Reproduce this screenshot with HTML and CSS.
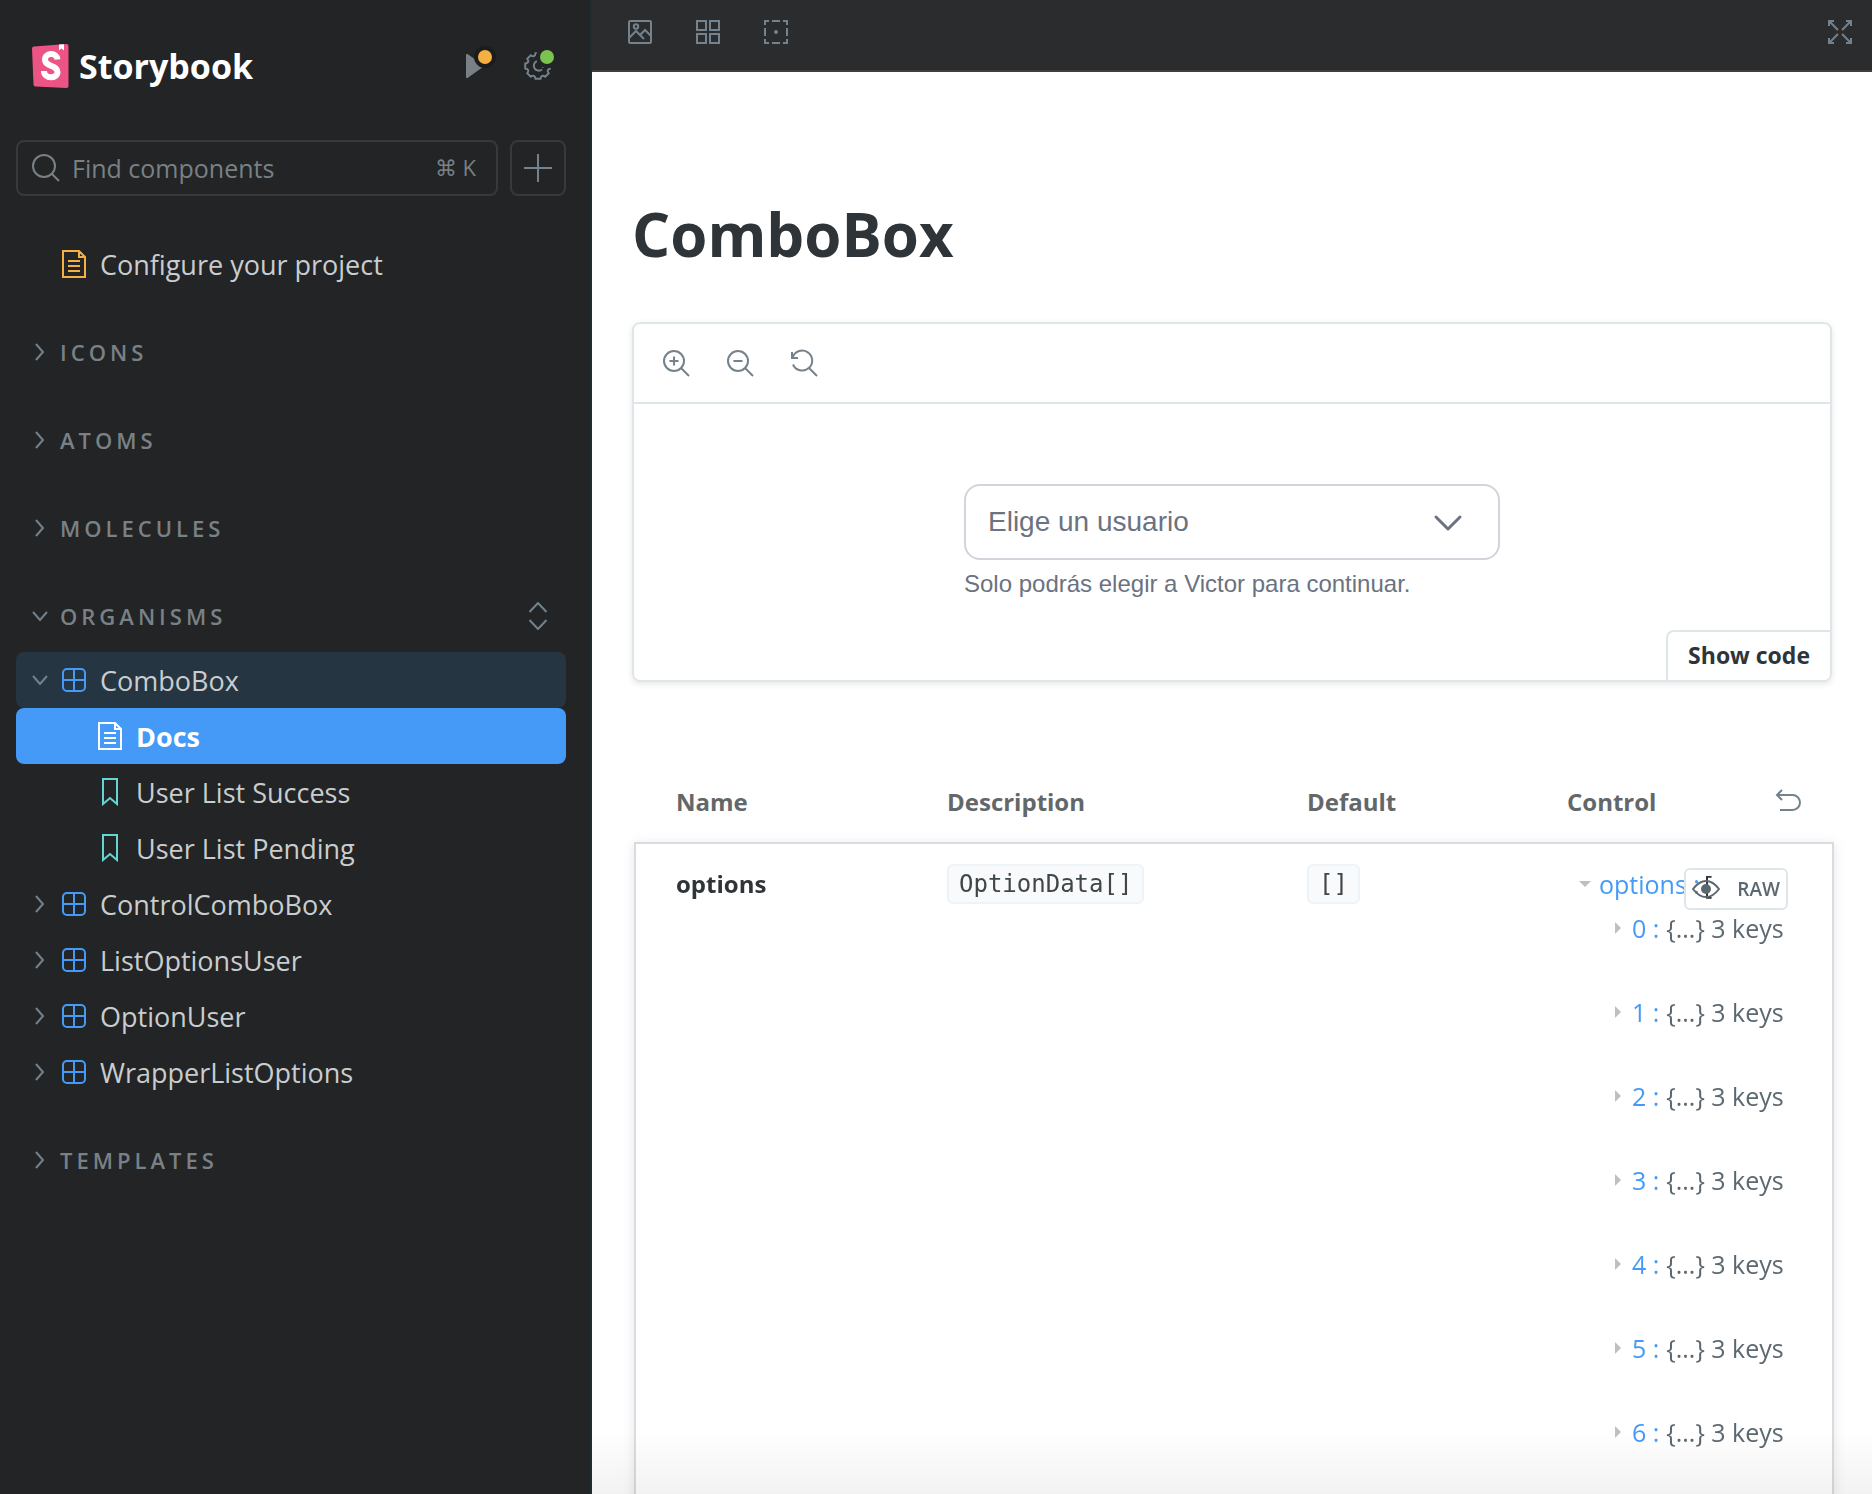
FILE: index.html
```html
<!DOCTYPE html>
<html lang="en">
<head>
<meta charset="utf-8">
<title>ComboBox - Docs - Storybook</title>
<link rel="stylesheet" href="styles.css">
</head>
<body>
<svg class="sprite" aria-hidden="true">
  <symbol id="chevron-right" viewBox="0 0 16 28"><path d="M4 6l7 8-7 8"/></symbol>
  <symbol id="chevron-down" viewBox="0 0 16 28"><path d="M1 10l7 8 7-8"/></symbol>
  <symbol id="component" viewBox="0 0 28 28"><rect x="3" y="3" width="22" height="22" rx="4"/><path d="M14 3v22M3 14h22"/></symbol>
  <symbol id="document" viewBox="0 0 28 28"><path d="M3 1h16l6 6v20H3zM19 1v6h6M8 11h12M8 16h12M8 21h12"/></symbol>
  <symbol id="bookmark" viewBox="0 0 28 28"><path d="M7 1h14v25l-7-6-7 6z"/></symbol>
</svg>
<div class="app">
  <aside class="sidebar">
    <header class="brand">
      <a class="brand-link" href="#">
        <svg class="brand-mark" width="37" height="44" viewBox="0 0 37 44" aria-hidden="true">
          <path fill="#ec5485" d="M2 2.500L34.500 0Q36.500 0 36.500 2V42q0 2-2 2L3.500 42.600Q1.600 42.500 1.500 40.500L0 4.500Q0 2.700 2 2.500z"/>
          <path fill="#fff" d="M27 .6l5-.4v6.200l-2.500-1.800L27 6.300z"/>
          <path fill="none" stroke="#fff" stroke-width="6" d="M25.500 15.500C25 8 13 8.500 13 15.500c0 7.500 12.500 5.500 12.500 12.500 0 7-13.500 7.500-13.500-1"/>
        </svg>
        <span>Storybook</span>
      </a>
      <button class="icon-button" type="button" aria-label="Run tests">
        <svg class="icon" width="28" height="28" viewBox="0 0 28 28"><path fill="#798186" stroke="none" d="M6 3q0-1.500 1.500-1L23 13q1 1 0 2L7.500 26Q6 26.500 6 25z"/></svg>
        <span class="status status-warning"></span>
      </button>
      <button class="icon-button" type="button" aria-label="Settings">
        <svg class="icon" width="28" height="28" viewBox="-14 -14 28 28"><path d="M12.760 2.480Q7.850 3.250 10.780 7.270L7.270 10.780Q3.250 7.850 2.480 12.760H-2.480Q-3.250 7.850-7.270 10.780L-10.780 7.270Q-7.850 3.250-12.760 2.480V-2.480Q-7.850-3.250-10.780-7.270L-7.270-10.780Q-3.250-7.850-2.480-12.760H0M-1-5A5 5 0 1 0 4 3.500M4 1h1.500"/></svg>
        <span class="status status-ok"></span>
      </button>
    </header>

    <div class="search">
      <label class="search-box">
        <svg class="icon" width="28" height="28" viewBox="0 0 28 28" aria-hidden="true"><circle cx="12" cy="12" r="11"/><path d="M20 20l7 7"/></svg>
        <input class="search-input" type="text" placeholder="Find components" aria-label="Find components">
        <kbd class="search-keys">⌘ K</kbd>
      </label>
      <button class="add-button" type="button" aria-label="Create a new story">
        <svg class="icon" width="28" height="28" viewBox="0 0 28 28"><path d="M14 0v28M0 14h28"/></svg>
      </button>
    </div>

    <nav class="tree" aria-label="Stories">
      <a class="row row-root" href="#"><svg class="icon icon-docs" width="28" height="28"><use href="#document"/></svg>Configure your project</a>
      <section class="group"><button class="group-toggle" type="button"><svg class="icon" width="16" height="28"><use href="#chevron-right"/></svg>ICONS</button></section>
      <section class="group"><button class="group-toggle" type="button"><svg class="icon" width="16" height="28"><use href="#chevron-right"/></svg>ATOMS</button></section>
      <section class="group"><button class="group-toggle" type="button"><svg class="icon" width="16" height="28"><use href="#chevron-right"/></svg>MOLECULES</button></section>
      <section class="group">
        <div class="group-head">
          <button class="group-toggle" type="button"><svg class="icon" width="16" height="28"><use href="#chevron-down"/></svg>ORGANISMS</button>
          <button class="icon-button" type="button" aria-label="Expand all"><svg class="icon" width="28" height="28" viewBox="0 0 28 28"><path d="M5.500 10L14 1l8.500 9M5.500 18l8.500 9 8.500-9"/></svg></button>
        </div>
        <a class="row row-open" href="#"><svg class="icon" width="16" height="28"><use href="#chevron-down"/></svg><svg class="icon icon-component" width="28" height="28"><use href="#component"/></svg>ComboBox</a>
        <a class="row row-child row-selected" href="#" aria-current="page"><svg class="icon" width="28" height="28"><use href="#document"/></svg>Docs</a>
        <a class="row row-child" href="#"><svg class="icon icon-story" width="28" height="28"><use href="#bookmark"/></svg>User List Success</a>
        <a class="row row-child" href="#"><svg class="icon icon-story" width="28" height="28"><use href="#bookmark"/></svg>User List Pending</a>
        <a class="row" href="#"><svg class="icon" width="16" height="28"><use href="#chevron-right"/></svg><svg class="icon icon-component" width="28" height="28"><use href="#component"/></svg>ControlComboBox</a>
        <a class="row" href="#"><svg class="icon" width="16" height="28"><use href="#chevron-right"/></svg><svg class="icon icon-component" width="28" height="28"><use href="#component"/></svg>ListOptionsUser</a>
        <a class="row" href="#"><svg class="icon" width="16" height="28"><use href="#chevron-right"/></svg><svg class="icon icon-component" width="28" height="28"><use href="#component"/></svg>OptionUser</a>
        <a class="row" href="#"><svg class="icon" width="16" height="28"><use href="#chevron-right"/></svg><svg class="icon icon-component" width="28" height="28"><use href="#component"/></svg>WrapperListOptions</a>
      </section>
      <section class="group"><button class="group-toggle" type="button"><svg class="icon" width="16" height="28"><use href="#chevron-right"/></svg>TEMPLATES</button></section>
    </nav>
  </aside>

  <div class="main">
    <div class="topbar">
      <button class="icon-button" type="button" aria-label="Change background">
        <svg class="icon" width="28" height="28" viewBox="0 0 28 28"><rect x="3" y="3" width="22" height="22" rx="1"/><circle cx="10" cy="8.500" r="2.200"/><path d="M3 20l7-7 8 8M14 17l5-5 6 6"/></svg>
      </button>
      <button class="icon-button" type="button" aria-label="Apply a grid">
        <svg class="icon" width="28" height="28" viewBox="0 0 28 28"><rect x="3" y="3" width="9" height="9"/><rect x="16" y="3" width="9" height="9"/><rect x="3" y="16" width="9" height="9"/><rect x="16" y="16" width="9" height="9"/></svg>
      </button>
      <button class="icon-button" type="button" aria-label="Apply outlines">
        <svg class="icon" width="28" height="28" viewBox="0 0 28 28"><path d="M3 7V3h4M10 3h8M21 3h4v4M25 10v8M25 21v4h-4M18 25h-8M7 25H3v-4M3 18v-8"/><circle cx="14" cy="14" r="1"/></svg>
      </button>
      <button class="icon-button push" type="button" aria-label="Go full screen">
        <svg class="icon" width="28" height="28" viewBox="0 0 28 28"><path d="M3 8V3h5M3 3l9 9M20 3h5v5M25 3l-9 9M3 20v5h5M3 25l9-9M25 20v5h-5M25 25l-9-9"/></svg>
      </button>
    </div>

    <main class="docs">
      <h1 class="title">ComboBox</h1>

      <section class="preview">
        <div class="preview-bar">
          <button class="icon-button" type="button" aria-label="Zoom in">
            <svg class="icon" width="28" height="28" viewBox="0 0 28 28"><circle cx="12" cy="12" r="10"/><path d="M19 19l8 8M12 7.500v9M7.500 12h9"/></svg>
          </button>
          <button class="icon-button" type="button" aria-label="Zoom out">
            <svg class="icon" width="28" height="28" viewBox="0 0 28 28"><circle cx="12" cy="12" r="10"/><path d="M19 19l8 8M7.500 12h9"/></svg>
          </button>
          <button class="icon-button" type="button" aria-label="Reset zoom">
            <svg class="icon" width="28" height="28" viewBox="0 0 28 28"><path d="M19 19l8 8M2 3v6h6M2.500 9A10 10 0 1 1 3 15.500"/></svg>
          </button>
        </div>
        <div class="canvas">
          <div class="combo">
            <button class="combo-button" type="button" aria-haspopup="listbox" aria-describedby="combo-help">
              <span>Elige un usuario</span>
              <svg width="32" height="32" viewBox="0 0 32 32" aria-hidden="true"><path d="M4 11l12 12 12-12"/></svg>
            </button>
            <p class="combo-help" id="combo-help">Solo podrás elegir a Victor para continuar.</p>
          </div>
        </div>
        <button class="show-code" type="button">Show code</button>
      </section>

      <div class="args">
        <table class="args-table">
          <colgroup><col class="col-name"><col class="col-description"><col class="col-default"><col></colgroup>
          <thead>
            <tr>
              <th scope="col">Name</th>
              <th scope="col">Description</th>
              <th scope="col">Default</th>
              <th scope="col">
                <div class="control-head">Control
                  <button class="reset" type="button" aria-label="Reset controls"><svg class="icon" width="28" height="28" viewBox="0 0 28 28"><path d="M8 3L3 8l5 5M3 8h15.500a7.500 7.500 0 0 1 0 15H6"/></svg></button>
                </div>
              </th>
            </tr>
          </thead>
          <tbody>
            <tr>
              <td class="arg-name">options</td>
              <td><code class="chip">OptionData[]</code></td>
              <td><code class="chip">[]</code></td>
              <td class="arg-control">
                <button class="raw" type="button"><svg class="icon" width="28" height="28" viewBox="0 0 28 28" aria-hidden="true"><path d="M1 14Q7 6 14 6T27 14Q21 22 14 22T1 14z"/><circle cx="14" cy="14" r="4" fill="currentColor"/></svg>RAW</button>
                <div class="json-root"><span class="arrow arrow-down"></span><span class="json-key">options :</span><span class="json-bracket">[</span></div>
                <ul class="json-list">
                  <li><span class="arrow arrow-right"></span><span class="json-key">0 :</span><span>{...} 3 keys</span></li>
                  <li><span class="arrow arrow-right"></span><span class="json-key">1 :</span><span>{...} 3 keys</span></li>
                  <li><span class="arrow arrow-right"></span><span class="json-key">2 :</span><span>{...} 3 keys</span></li>
                  <li><span class="arrow arrow-right"></span><span class="json-key">3 :</span><span>{...} 3 keys</span></li>
                  <li><span class="arrow arrow-right"></span><span class="json-key">4 :</span><span>{...} 3 keys</span></li>
                  <li><span class="arrow arrow-right"></span><span class="json-key">5 :</span><span>{...} 3 keys</span></li>
                  <li><span class="arrow arrow-right"></span><span class="json-key">6 :</span><span>{...} 3 keys</span></li>
                </ul>
              </td>
            </tr>
          </tbody>
        </table>
      </div>
    </main>
  </div>
</div>
</body>
</html>
```
FILE: styles.css
```css
* { box-sizing: border-box; }

body {
  margin: 0;
  font-family: "Open Sans", "Noto Sans", sans-serif;
  font-size: 25px;
  color: #2e3438;
  background: #fff;
}

button {
  font: inherit;
  color: inherit;
  background: none;
  border: 0;
  padding: 0;
  cursor: pointer;
}

a { color: inherit; text-decoration: none; }

.sprite { position: absolute; width: 0; height: 0; }

.icon {
  flex: none;
  display: block;
  fill: none;
  stroke: currentColor;
  stroke-width: 2;
}

.icon-button {
  position: relative;
  flex: none;
  display: flex;
  align-items: center;
  justify-content: center;
  width: 56px;
  height: 56px;
  color: #73828c;
}

.app { display: flex; height: 100vh; overflow: hidden; }

/* Sidebar */
.sidebar {
  flex: none;
  width: 592px;
  padding: 38px 24px 38px 16px;
  overflow: hidden;
  color: #c9cdcf;
  background: #222425;
  border-right: 2px solid #212c31;
}

.brand { display: flex; align-items: center; gap: 8px; padding-left: 16px; }

.brand-link {
  flex: 1;
  display: flex;
  align-items: center;
  gap: 10px;
  font-size: 34px;
  font-weight: 700;
  line-height: 44px;
  color: #fff;
}

.status {
  position: absolute;
  top: 12px;
  right: 10px;
  width: 14px;
  height: 14px;
  border-radius: 50%;
}

.status-warning { background: #f5b041; box-shadow: 0 0 0 4px #1b1c1d; }
.status-ok { right: 12px; background: #7cc24f; box-shadow: 0 0 0 4px #222425; }

.search { display: flex; gap: 12px; margin-top: 46px; }

.search-box,
.add-button {
  display: flex;
  align-items: center;
  height: 56px;
  border: 2px solid #37393b;
  border-radius: 8px;
  color: #798186;
}

.search-box { flex: 1; min-width: 0; padding: 0 20px 0 14px; gap: 12px; }
.add-button { flex: none; justify-content: center; width: 56px; color: #73828c; }

.search-input {
  flex: 1;
  min-width: 0;
  padding: 0;
  font: inherit;
  color: #c9cdcf;
  background: none;
  border: 0;
  outline: 0;
}

.search-input::placeholder { color: #798186; opacity: 1; }
.search-keys { font-family: inherit; font-size: 22px; line-height: 32px; padding-bottom: 2px; }

.tree { margin-top: 40px; }

.row {
  display: flex;
  align-items: center;
  gap: 12px;
  height: 56px;
  padding-left: 16px;
  border-radius: 8px;
  font-size: 27px;
}

.row .icon { color: #73828c; }
.row-root { padding-left: 44px; }
.row-child { padding-left: 80px; }
.row-open { background: #263542; }
.row-selected { background: #4599f7; color: #fff; font-weight: 700; }
.row .icon-docs { color: #f5b041; }
.row .icon-component { color: #4599f7; }
.row .icon-story { color: #63d5d2; }
.row-selected .icon { color: #fff; }

.group { margin-top: 32px; }
.group-head { display: flex; margin-bottom: 8px; }

.group-toggle {
  flex: 1;
  display: flex;
  align-items: center;
  gap: 12px;
  height: 56px;
  padding-left: 16px;
  font-size: 22px;
  font-weight: 600;
  letter-spacing: 4px;
  color: #798186;
}

.group-toggle .icon { color: #73828c; }

/* Main column */
.main {
  position: relative;
  flex: 1;
  min-width: 0;
  display: flex;
  flex-direction: column;
}

.main::after {
  content: "";
  position: absolute;
  inset: auto 0 0;
  height: 64px;
  background: linear-gradient(rgba(0, 0, 0, 0), rgba(0, 0, 0, .05));
  pointer-events: none;
}

.topbar {
  flex: none;
  display: flex;
  gap: 12px;
  height: 72px;
  padding: 4px 4px 0 20px;
  background: #2b2c2e;
  border-bottom: 2px solid #403d3e;
}

.push { margin-left: auto; }

.docs { flex: 1; min-height: 0; overflow: hidden; padding: 122px 40px 0; }

.title { margin: 0 0 48px; font-size: 60px; font-weight: 700; line-height: 80px; }

.preview {
  position: relative;
  border: 2px solid #dfe6ea;
  border-radius: 8px;
  box-shadow: 0 2px 6px rgba(0, 0, 0, .1);
}

.preview-bar {
  display: flex;
  align-items: center;
  gap: 8px;
  height: 80px;
  padding-left: 14px;
  border-bottom: 2px solid #dfe6ea;
}

.canvas { padding: 80px 40px; }

.combo {
  width: 536px;
  max-width: 100%;
  margin: 0 auto;
  font-family: "Liberation Sans", Arial, sans-serif;
  color: #6b7280;
}

.combo-button {
  display: flex;
  align-items: center;
  justify-content: space-between;
  width: 100%;
  height: 76px;
  padding: 0 34px 0 22px;
  font-size: 28px;
  border: 2px solid #d1d5db;
  border-radius: 16px;
}

.combo-button svg {
  fill: none;
  stroke: #6b7280;
  stroke-width: 3;
  stroke-linecap: round;
  stroke-linejoin: round;
}

.combo-help { margin: 8px 0 0; font-size: 24px; line-height: 32px; }

.show-code {
  position: absolute;
  right: 0;
  bottom: 0;
  height: 50px;
  padding: 0 20px 2px;
  font-size: 23px;
  font-weight: 700;
  background: #fff;
  border: solid #dfe6ea;
  border-width: 2px 0 0 2px;
  border-radius: 8px 0 6px 0;
}

/* Args table */
.args { margin: 80px -2px 0 2px; }

.args-table {
  width: 100%;
  table-layout: fixed;
  border-collapse: separate;
  border-spacing: 0;
}

.col-name { width: 25%; }
.col-description { width: 30%; }
.col-default { width: 260px; }

.args-table th {
  height: 80px;
  padding: 0 0 2px 13px;
  font-size: 24px;
  font-weight: 700;
  text-align: left;
  color: #62676a;
}

.args-table th:first-child { padding-left: 42px; }

.args-table tbody { filter: drop-shadow(0 2px 6px rgba(0, 0, 0, .1)); }

.args-table td {
  height: 800px;
  padding: 20px 0 0 13px;
  vertical-align: top;
  line-height: 40px;
  background: #fff;
  border-top: 2px solid #d6dce1;
}

.args-table td:first-child { border-left: 2px solid #d6dce1; padding-left: 40px; }
.args-table td:last-child { border-right: 2px solid #d6dce1; }

.control-head {
  display: flex;
  align-items: center;
  justify-content: space-between;
  padding-right: 32px;
}

.reset { color: #73828c; }

.args-table .arg-name { font-size: 24px; font-weight: 700; }

.chip {
  display: inline-block;
  padding: 0 10px;
  font-family: "DejaVu Sans Mono", monospace;
  font-size: 24px;
  line-height: 36px;
  vertical-align: top;
  color: #414649;
  background: #f8fafc;
  border: 2px solid #ecf3f9;
  border-radius: 6px;
}

.args-table .arg-control {
  position: relative;
  padding-top: 18px;
  padding-left: 25px;
  line-height: 44px;
  color: #5c6870;
}

.raw {
  position: absolute;
  top: 24px;
  right: 44px;
  display: flex;
  align-items: center;
  gap: 17px;
  height: 42px;
  padding: 0 6px;
  font-size: 19px;
  font-weight: 600;
  color: #5c6870;
  border: 2px solid #dfe6ea;
  border-radius: 6px;
}

.json-root { display: flex; align-items: center; }
.json-key { color: #4599f7; }
.json-bracket { margin-left: 4px; color: #2e3438; }

.json-list { margin: 0; padding: 0 0 0 36px; list-style: none; }
.json-list li { display: flex; align-items: center; height: 44px; margin-bottom: 40px; gap: 7px; }

.arrow { flex: none; border: solid transparent; }
.arrow-down { border-width: 6px 6px 0; border-top-color: #bfbfbf; margin-right: 8px; }
.arrow-right { border-width: 6px 0 6px 6px; border-left-color: #bfbfbf; margin-right: 4px; }
```
